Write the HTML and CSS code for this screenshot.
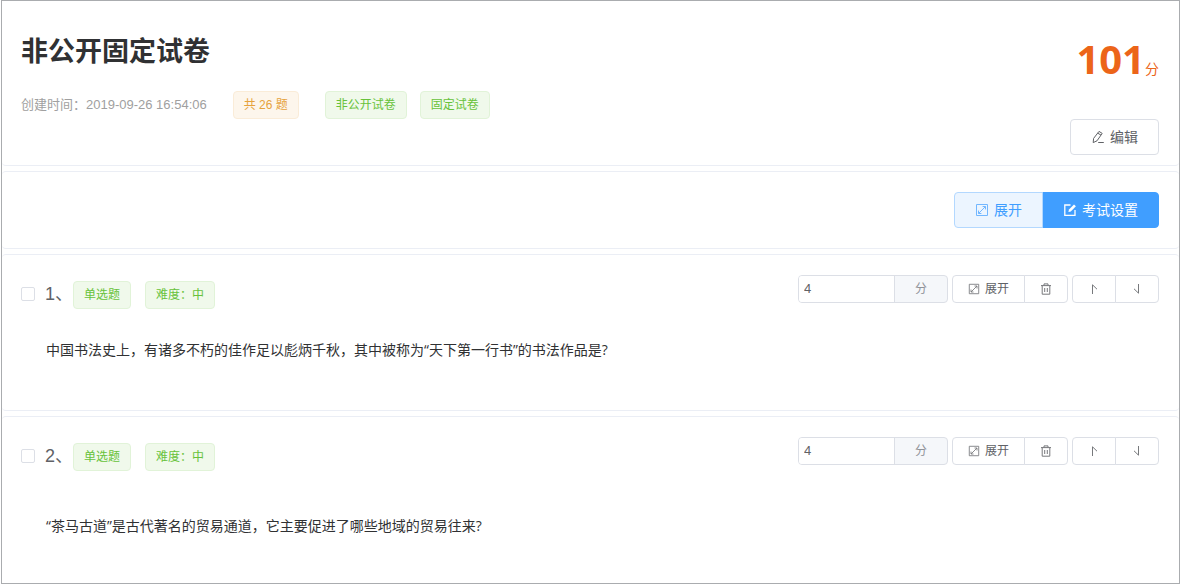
FILE: index.html
```
<!DOCTYPE html>
<html lang="zh-CN">
<head>
<meta charset="utf-8">
<title>非公开固定试卷</title>
<link rel="stylesheet" href="styles.css">
</head>
<body>
<svg class="sprite" aria-hidden="true">
  <symbol id="i-edit" viewBox="0 0 14 14"><path d="M2.6 8.4 8 1.4 11.2 3.4 6 10.8 2.2 12.6ZM6.8 3.2 10 5.1M7.2 12.5H12.8"/></symbol>
  <symbol id="i-expand" viewBox="0 0 14 14"><path d="M1.5 1.5H12.5V12.5H1.5ZM3.5 10.5 10.5 3.5M7.6 3.5H10.5V6.4M3.5 7.6V10.5H6.4"/></symbol>
  <symbol id="i-form" viewBox="0 0 14 14"><path d="M7.5 2H1.8V12.3H12V7"/><path class="solid" d="M5.4 9 6 6.6 11 1.4 12.9 3.2 7.8 8.4Z"/></symbol>
  <symbol id="i-trash" viewBox="0 0 12 12"><path d="M1 2.6H11M4 2.5V.9H8V2.5M2.2 2.6V11.2H9.8V2.6M4.7 5V9M7.3 5V9"/></symbol>
  <symbol id="i-up" viewBox="0 0 12 12"><path d="M4.5 11V1.8L9 6.2"/></symbol>
  <symbol id="i-down" viewBox="0 0 12 12"><path d="M7.5 1V10.2L3 5.8"/></symbol>
</svg>
<main class="frame">
  <header class="card head">
    <div class="summary">
      <h1 class="title">非公开固定试卷</h1>
      <div class="meta">
        <span class="time">创建时间：2019-09-26 16:54:06</span>
        <span class="tag warning">共 26 题</span>
        <span class="types"><span class="tag">非公开试卷</span><span class="tag">固定试卷</span></span>
      </div>
    </div>
    <div class="side">
      <div class="score"><strong class="points">101</strong>分</div>
      <button class="btn" type="button"><svg class="icon"><use href="#i-edit"/></svg>编辑</button>
    </div>
  </header>

  <section class="card toolbar">
    <div class="group">
      <button class="btn plain" type="button"><svg class="icon"><use href="#i-expand"/></svg>展开</button>
      <button class="btn primary" type="button"><svg class="icon"><use href="#i-form"/></svg>考试设置</button>
    </div>
  </section>

  <article class="card">
    <div class="row">
      <div class="label">
        <input class="check" type="checkbox" id="q1"><label class="num" for="q1">1、</label>
        <span class="tags"><span class="tag">单选题</span><span class="tag">难度：中</span></span>
      </div>
      <div class="actions">
        <div class="points-box"><input class="points-input" type="text" value="4" aria-label="第1题分数"><span class="unit">分</span></div>
        <div class="group">
          <button class="btn mini" type="button"><svg class="icon"><use href="#i-expand"/></svg>展开</button>
          <button class="btn mini" type="button" aria-label="删除"><svg class="icon"><use href="#i-trash"/></svg></button>
        </div>
        <div class="group">
          <button class="btn mini" type="button" aria-label="上移"><svg class="icon"><use href="#i-up"/></svg></button>
          <button class="btn mini" type="button" aria-label="下移"><svg class="icon"><use href="#i-down"/></svg></button>
        </div>
      </div>
    </div>
    <p class="question">中国书法史上，有诸多不朽的佳作足以彪炳千秋，其中被称为“天下第一行书”的书法作品是?</p>
  </article>

  <article class="card spacious">
    <div class="row">
      <div class="label">
        <input class="check" type="checkbox" id="q2"><label class="num" for="q2">2、</label>
        <span class="tags"><span class="tag">单选题</span><span class="tag">难度：中</span></span>
      </div>
      <div class="actions">
        <div class="points-box"><input class="points-input" type="text" value="4" aria-label="第2题分数"><span class="unit">分</span></div>
        <div class="group">
          <button class="btn mini" type="button"><svg class="icon"><use href="#i-expand"/></svg>展开</button>
          <button class="btn mini" type="button" aria-label="删除"><svg class="icon"><use href="#i-trash"/></svg></button>
        </div>
        <div class="group">
          <button class="btn mini" type="button" aria-label="上移"><svg class="icon"><use href="#i-up"/></svg></button>
          <button class="btn mini" type="button" aria-label="下移"><svg class="icon"><use href="#i-down"/></svg></button>
        </div>
      </div>
    </div>
    <p class="question">“茶马古道”是古代著名的贸易通道，它主要促进了哪些地域的贸易往来?</p>
  </article>
</main>
</body>
</html>
```
FILE: styles.css
```
* { box-sizing: border-box; }
body {
  margin: 0;
  background: #fff;
  color: #303133;
  font: 14px/20px "Open Sans", "Noto Sans CJK SC", sans-serif;
}
button, input { font: inherit; }
.sprite { position: absolute; width: 0; height: 0; }
.frame {
  min-height: 100vh;
  margin-left: 1px;
  border: 1px solid #aaacaf;
  display: flex;
  flex-direction: column;
  gap: 5px;
}
.card {
  border: solid #ebeef5;
  border-width: 1px 0;
  border-radius: 4px;
  padding: 20px 20px 20px 19px;
}
.card:first-child { border-top: 0; }
.card:last-child { border-bottom: 0; }

.head { display: flex; justify-content: space-between; padding-bottom: 10px; }
.title { margin: 10px 0 20px; font-size: 27px; line-height: 40px; font-weight: 700; }
.meta { display: flex; align-items: center; gap: 26px; }
.time { color: #a0a0a0; font-family: "Liberation Sans", "Noto Sans CJK SC", sans-serif; font-size: 13px; }
.types { display: flex; gap: 13px; }
.side { display: flex; flex-direction: column; gap: 12px; align-items: flex-end; }
.score { color: #ec6519; font-size: 14px; line-height: 76px; }
.points { font-size: 40px; }

.tag {
  height: 28px;
  padding: 0 10px;
  border: 1px solid #e1f3d8;
  border-radius: 4px;
  background: #f0f9eb;
  color: #67c23a;
  font-family: "Liberation Sans", "Noto Sans CJK SC", sans-serif;
  font-size: 12px;
  line-height: 26px;
  white-space: nowrap;
}
.tag.warning { background: #fdf6ec; border-color: #faecd8; color: #e6a23c; }

.btn {
  display: inline-flex;
  align-items: center;
  justify-content: center;
  gap: 5px;
  height: 36px;
  padding: 0 20px;
  border: 1px solid #dcdfe6;
  border-radius: 4px;
  background: #fff;
  color: #606266;
  white-space: nowrap;
}
.btn.plain { position: relative; background: #ecf5ff; border-color: #b3d8ff; color: #409eff; }
.btn.primary { background: #409eff; border-color: #409eff; color: #fff; }
.btn.mini { height: 28px; padding: 0 15px; font-size: 12px; }
.icon { width: 14px; height: 14px; fill: none; stroke: currentColor; stroke-width: 1; }
.primary .icon { stroke-width: 1.3; }
.plain .icon { opacity: .7; }
.mini .icon { width: 12px; height: 12px; opacity: .85; }
.solid { fill: currentColor; stroke: none; }
.group { display: flex; }
.group .btn:first-child { border-top-right-radius: 0; border-bottom-right-radius: 0; }
.group .btn:last-child { border-top-left-radius: 0; border-bottom-left-radius: 0; margin-left: -1px; }
.toolbar { display: flex; justify-content: flex-end; }

.row { display: flex; justify-content: space-between; align-items: flex-start; }
.label { display: flex; align-items: center; padding-top: 6px; }
.check {
  appearance: none;
  width: 14px;
  height: 14px;
  margin: 0 10px 2px 0;
  border: 1px solid #dcdfe6;
  border-radius: 2px;
  background: #fff;
}
.check:checked { background: #409eff; }
.num { padding-bottom: 2px; color: #606266; font: 18px/24px "Liberation Sans", "Noto Sans CJK SC", sans-serif; }
.tags { display: flex; gap: 14px; }
.actions { display: flex; gap: 4px; }
.points-box {
  display: flex;
  width: 150px;
  height: 28px;
  border: 1px solid #dcdfe6;
  border-radius: 4px;
  background: #f5f7fa;
  overflow: hidden;
}
.points-input {
  flex: 1;
  min-width: 0;
  padding: 0 5px;
  border: 0;
  border-right: 1px solid #dcdfe6;
  background: #fff;
  color: #606266;
  font-family: "Liberation Sans", sans-serif;
  font-size: 13px;
}
.unit { padding: 0 20px; color: #909399; font-size: 12px; line-height: 26px; }
.question { margin: 31px 0 30px 25px; }
.spacious .question { margin: 45px 0 20px 25px; }
```
